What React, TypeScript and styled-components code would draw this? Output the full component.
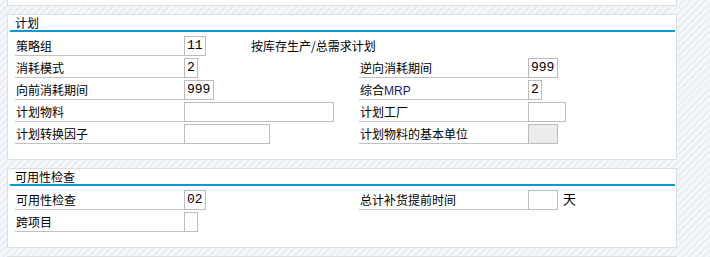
import React from "react";
import styled, { createGlobalStyle } from "styled-components";

const Global = createGlobalStyle`
  html, body {
    margin: 0;
    padding: 0;
  }
  body {
    font-family: "Noto Sans CJK SC", "Noto Sans", sans-serif;
    font-size: 12px;
    color: #000;
    background-color: #eef2f7;
    background-image: repeating-linear-gradient(
      135deg,
      #f4f7fa 0px,
      #f4f7fa 3px,
      #e8edf3 3px,
      #e8edf3 5px
    );
    min-height: 257px;
    overflow: hidden;
  }
`;

const Page = styled.div`
  display: flex;
  flex-direction: column;
  gap: 8px;
  padding: 0 0 0 7px;
  width: 670px;
`;

const Panel = styled.section<{ $stub?: boolean }>`
  background: #ffffff;
  border: 1px solid #dedede;
  border-top: ${(p) => (p.$stub ? "none" : "1px solid #dedede")};
  height: ${(p) => (p.$stub ? "5px" : "auto")};
  box-sizing: content-box;
`;

const Header = styled.div`
  height: 15px;
  line-height: 16px;
  margin: 0 1px 0 2px;
  padding-left: 5px;
  border-bottom: 2px solid #0a98d6;
  font-size: 12px;
  white-space: nowrap;
  overflow: hidden;
`;

const Body = styled.div`
  display: flex;
  flex-direction: column;
  gap: 2px;
  padding: 4px 0 15px 7px;
`;

const Row = styled.div`
  display: flex;
  height: 20px;
`;

const Field = styled.div<{ $w?: number }>`
  display: flex;
  align-items: flex-start;
  width: ${(p) => (p.$w ? `${p.$w}px` : "auto")};
  flex: none;
  white-space: nowrap;
`;

const Label = styled.div`
  width: 168px;
  height: 19px;
  line-height: 19px;
  border-bottom: 1px solid #c2c2c2;
  padding-left: 1px;
  box-sizing: content-box;
  flex: none;
  white-space: nowrap;
`;

const Input = styled.div<{ $w: number; $disabled?: boolean }>`
  width: ${(p) => p.$w}px;
  height: 20px;
  box-sizing: border-box;
  border: 1px solid #bcbcbc;
  background: ${(p) => (p.$disabled ? "#ebebeb" : "#ffffff")};
  font-family: "Liberation Mono", "DejaVu Sans Mono", monospace;
  font-size: 13px;
  line-height: 18px;
  padding-left: 2px;
  flex: none;
  overflow: hidden;
`;

const Desc = styled.span`
  margin-left: 45px;
  line-height: 19px;
  white-space: nowrap;
`;

const Unit = styled.span`
  margin-left: 5px;
  font-size: 13px;
  line-height: 18px;
`;

const Latin = styled.span`
  font-family: "Liberation Sans", Arial, sans-serif;
  color: #1a1a6e;
`;

export default function App() {
  return (
    <>
      <Global />
      <Page>
        <Panel $stub />
        <Panel>
          <Header>计划</Header>
          <Body>
            <Row>
              <Field $w={344}>
                <Label>策略组</Label>
                <Input $w={22}>11</Input>
                <Desc>按库存生产/总需求计划</Desc>
              </Field>
            </Row>
            <Row>
              <Field $w={344}>
                <Label>消耗模式</Label>
                <Input $w={14}>2</Input>
              </Field>
              <Field>
                <Label>逆向消耗期间</Label>
                <Input $w={30}>999</Input>
              </Field>
            </Row>
            <Row>
              <Field $w={344}>
                <Label>向前消耗期间</Label>
                <Input $w={30}>999</Input>
              </Field>
              <Field>
                <Label>
                  综合<Latin>MRP</Latin>
                </Label>
                <Input $w={14}>2</Input>
              </Field>
            </Row>
            <Row>
              <Field $w={344}>
                <Label>计划物料</Label>
                <Input $w={150} />
              </Field>
              <Field>
                <Label>计划工厂</Label>
                <Input $w={38} />
              </Field>
            </Row>
            <Row>
              <Field $w={344}>
                <Label>计划转换因子</Label>
                <Input $w={86} />
              </Field>
              <Field>
                <Label>计划物料的基本单位</Label>
                <Input $w={30} $disabled />
              </Field>
            </Row>
          </Body>
        </Panel>
        <Panel>
          <Header>可用性检查</Header>
          <Body>
            <Row>
              <Field $w={344}>
                <Label>可用性检查</Label>
                <Input $w={22}>02</Input>
              </Field>
              <Field>
                <Label>总计补货提前时间</Label>
                <Input $w={30} />
                <Unit>天</Unit>
              </Field>
            </Row>
            <Row>
              <Field $w={344}>
                <Label>跨项目</Label>
                <Input $w={14} />
              </Field>
            </Row>
          </Body>
        </Panel>
        <Panel />
      </Page>
    </>
  );
}
